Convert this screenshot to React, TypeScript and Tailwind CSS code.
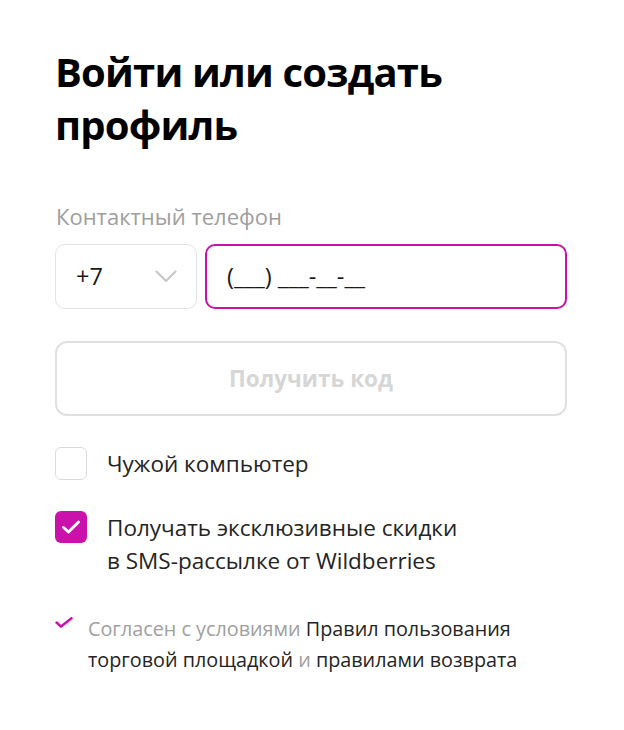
import React from "react";

export default function App() {
  return (
    <div className="w-[624px] h-[730px] bg-white" style={{ fontFamily: '"Open Sans", "Noto Sans", sans-serif' }}>
      <div className="pl-[55px] pt-[45px] w-[567px]">
        <h1 className="text-[40px] leading-[53px] font-bold text-black tracking-[-0.8px]">
          Войти или создать
          <br />
          профиль
        </h1>
        <div className="mt-[50px] text-[22px] leading-[30px] text-[#9e9e9e] pl-[1px]">Контактный телефон</div>
        <div className="mt-[13px] flex gap-[8px]">
          <div className="w-[142px] h-[65px] border border-[#e3e3e3] rounded-[10px] flex items-center justify-between pl-[20px] pr-[19px]">
            <span className="text-[23.5px] text-[#1a1a1a]">+7</span>
            <svg width="22" height="13" viewBox="0 0 22 13" fill="none">
              <path d="M1.5 1.5 L11 11 L20.5 1.5" stroke="#c8c8c8" strokeWidth="2.2" strokeLinecap="round" strokeLinejoin="round" />
            </svg>
          </div>
          <div className="flex-1 h-[65px] border-2 border-[#cb11ab] rounded-[10px] flex items-center pl-[20px]">
            <span className="text-[23.5px] text-[#1a1a1a]">(___) ___-__-__</span>
          </div>
        </div>
        <button className="mt-[32px] w-full h-[75px] border-2 border-[#e0e0e0] rounded-[12px] flex items-center justify-center text-[22.5px] font-bold text-[#d6d6d6]">
          Получить код
        </button>
        <div className="mt-[31px] flex items-center gap-[20px]">
          <div className="w-[32px] h-[33px] border border-[#dcdcdc] rounded-[6px]" />
          <span className="text-[22.5px] leading-[33px] text-[#242424]">Чужой компьютер</span>
        </div>
        <div className="mt-[31px] flex items-start gap-[20px]">
          <div className="w-[32px] h-[32px] shrink-0 bg-[#cb11ab] rounded-[6px] flex items-center justify-center">
            <svg width="20" height="16" viewBox="0 0 20 16" fill="none">
              <path d="M2.5 8.5 L7.5 13 L17.5 3" stroke="white" strokeWidth="3" strokeLinecap="round" strokeLinejoin="round" />
            </svg>
          </div>
          <div className="text-[22.5px] leading-[33px] text-[#242424]">
            Получать эксклюзивные скидки
            <br />в SMS-рассылке от Wildberries
          </div>
        </div>
        <div className="mt-[36px] flex items-start gap-[15px]">
          <svg className="mt-[4px] shrink-0" width="18" height="11" viewBox="0 0 18 11" fill="none">
            <path d="M1.5 5.5 L6 9.5 L16.5 1.2" stroke="#cb11ab" strokeWidth="2.4" strokeLinecap="round" strokeLinejoin="round" />
          </svg>
          <div className="text-[19.8px] leading-[31px] text-[#a0a0a0]">
            Согласен с условиями <span className="text-[#242424]">Правил пользования</span>
            <br />
            <span className="text-[#242424]">торговой площадкой</span> и{" "}
            <span className="text-[#242424]">правилами возврата</span>
          </div>
        </div>
      </div>
    </div>
  );
}
